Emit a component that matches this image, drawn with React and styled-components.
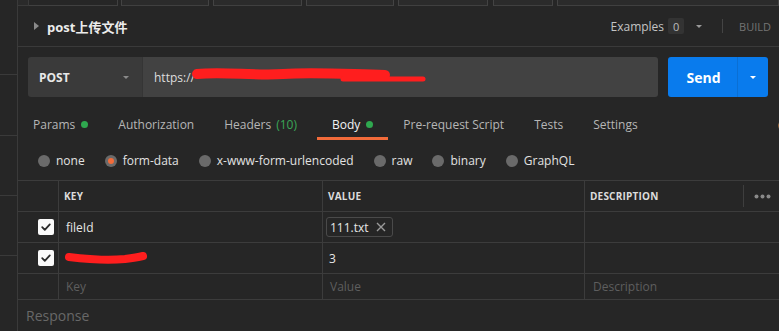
import React from "react";
import styled, { createGlobalStyle } from "styled-components";

const Global = createGlobalStyle`
  html, body { margin: 0; padding: 0; background: #262626; }
  body { font-family: "Open Sans", "Noto Sans CJK SC", sans-serif; }
  * { box-sizing: border-box; }
`;

const Root = styled.div`
  display: flex;
  width: 779px;
  height: 331px;
  overflow: hidden;
  background: #262626;
`;

const Sidebar = styled.div`
  width: 18px;
  flex: none;
  border-right: 1px solid #3a3a3a;
  display: flex;
  flex-direction: column;
`;

const SideCell = styled.div`
  height: ${(p) => p.$h}px;
  flex: none;
  border-bottom: 1px solid #3a3a3a;
`;

const Main = styled.div`
  flex: 1;
  min-width: 0;
  display: flex;
  flex-direction: column;
`;

const TopStrip = styled.div`
  display: flex;
  height: 6px;
  flex: none;
`;

const StripBox = styled.div`
  width: 11px;
  height: 6px;
  border-right: 1px solid #3a3a3a;
  border-bottom: 1px solid #3a3a3a;
  background: #2a2a2a;
`;

const StripGap = styled.div`
  width: ${(p) => p.$w}px;
  flex: none;
  border-right: ${(p) => (p.$line ? "1px solid #404040" : "none")};
  border-bottom: ${(p) => (p.$line ? "1px solid #404040" : "none")};
`;

const StripTab = styled.div`
  width: ${(p) => p.$w}px;
  flex: ${(p) => (p.$grow ? 1 : "none")};
  height: 6px;
  margin-left: ${(p) => p.$ml}px;
  background: #2b2b2b;
  border-left: 1px solid #434343;
  border-right: 1px solid #434343;
  border-bottom: 1px solid #404040;
`;

const Header = styled.div`
  height: 41px;
  flex: none;
  display: flex;
  align-items: center;
  border-bottom: 1px solid #3a3a3a;
  padding-left: 16px;
  padding-right: 8px;
`;

const Caret = styled.span`
  display: inline-block;
  width: 0;
  height: 0;
  border-left: ${(p) => p.$s}px solid transparent;
  border-right: ${(p) => p.$s}px solid transparent;
  border-top: ${(p) => p.$s}px solid ${(p) => p.$c || "#888"};
`;

const SideArrow = styled.span`
  width: 0;
  height: 0;
  border-top: 4px solid transparent;
  border-bottom: 4px solid transparent;
  border-left: 5px solid #8a8a8a;
  margin-right: 8px;
`;

const Title = styled.div`
  font-size: 13px;
  font-weight: 700;
  color: #ececec;
  flex: 1;
`;

const Examples = styled.div`
  display: flex;
  align-items: center;
  font-size: 12px;
  color: #c4c4c4;
  gap: 4px;
`;

const Badge = styled.span`
  width: 16px;
  height: 16px;
  display: inline-flex;
  align-items: center;
  justify-content: center;
  background: #333;
  border-radius: 2px;
  font-size: 11px;
  color: #bbb;
  margin-right: 8px;
`;

const VDivider = styled.span`
  width: 1px;
  height: 14px;
  background: #444;
  margin: 0 16px 0 20px;
`;

const Build = styled.span`
  font-size: 11px;
  color: #747474;
`;

const UrlRow = styled.div`
  display: flex;
  height: 40px;
  margin-top: 10px;
  padding: 0 11px 0 10px;
  flex: none;
`;

const Method = styled.div`
  width: 115px;
  display: flex;
  align-items: center;
  justify-content: space-between;
  padding: 0 13px 0 11px;
  background: #3a3a3a;
  border-radius: 3px 0 0 3px;
  border-right: 1px solid #353535;
  font-size: 12px;
  font-weight: 700;
  color: #e8e8e8;
`;

const UrlInput = styled.div`
  flex: 1;
  position: relative;
  display: flex;
  align-items: center;
  padding-left: 11px;
  background: #424242;
  border-radius: 0 3px 3px 0;
  font-size: 12px;
  color: #dedede;
  margin-right: 10px;
`;

const Scribble = styled.svg`
  position: absolute;
  left: ${(p) => p.$x}px;
  top: ${(p) => p.$y}px;
  overflow: visible;
`;

const SendGroup = styled.div`
  width: 100px;
  display: flex;
  background: #097bed;
  border-radius: 3px;
`;

const SendMain = styled.div`
  width: 70px;
  display: flex;
  align-items: center;
  justify-content: center;
  border-right: 1px solid #0a6fd4;
  font-size: 14px;
  font-weight: 700;
  color: #fff;
  padding-left: 2px;
`;

const SendDrop = styled.div`
  flex: 1;
  display: flex;
  align-items: center;
  justify-content: center;
`;

const Tabs = styled.div`
  display: flex;
  height: 33px;
  margin-top: 10px;
  flex: none;
  position: relative;
`;

const Tab = styled.div`
  display: flex;
  align-items: center;
  padding: 0 15px;
  height: 33px;
  font-size: 12px;
  color: ${(p) => (p.$active ? "#f4f4f4" : "#b6b6b6")};
  border-bottom: 3px solid ${(p) => (p.$active ? "#f26b3a" : "transparent")};
  padding-top: 4px;
  gap: 6px;
`;

const Dot = styled.span`
  width: 7px;
  height: 7px;
  border-radius: 50%;
  background: #2fa84f;
`;

const Count = styled.span`
  color: #3aa757;
  margin-left: -1px;
  margin-right: 5px;
`;

const CutTab = styled.div`
  position: absolute;
  right: -6px;
  top: 10px;
  font-size: 12px;
  color: #f26b3a;
`;

const Radios = styled.div`
  display: flex;
  align-items: center;
  height: 40px;
  padding-left: 20px;
  padding-top: 1px;
  flex: none;
`;

const RadioItem = styled.label`
  display: flex;
  align-items: center;
  gap: 6px;
  margin-right: 20px;
  font-size: 12px;
  color: #e2e2e2;
`;

const RadioCircle = styled.span`
  width: 12px;
  height: 12px;
  border-radius: 50%;
  background: #6a6a6a;
  display: flex;
  align-items: center;
  justify-content: center;
  &::after {
    content: "";
    width: 6px;
    height: 6px;
    border-radius: 50%;
    background: ${(p) => (p.$on ? "#f26b3a" : "transparent")};
  }
`;

const Table = styled.div`
  display: grid;
  grid-template-columns: 41px 264px 262px 1fr;
  border-top: 1px solid #3c3c3c;
  flex: none;
`;

const Cell = styled.div`
  height: ${(p) => p.$h}px;
  border-right: ${(p) => (p.$last ? "none" : "1px solid #3c3c3c")};
  border-bottom: 1px solid #3c3c3c;
  display: flex;
  align-items: center;
  padding-left: ${(p) => p.$pl || 0}px;
  justify-content: ${(p) => (p.$end ? "flex-end" : "flex-start")};
  padding-right: ${(p) => p.$pr || 0}px;
  position: relative;
  font-size: 12px;
  color: ${(p) => (p.$ph ? "#5e5e5e" : "#e6e6e6")};
`;

const HeadText = styled.span`
  font-size: 10px;
  font-weight: 700;
  color: #dcdcdc;
  letter-spacing: 0.2px;
  flex: 1;
`;

const HeadSep = styled.span`
  width: 1px;
  height: 22px;
  background: #3e3e3e;
  margin-right: 10px;
`;

const Box = styled.span`
  width: 16px;
  height: 16px;
  background: #fafafa;
  border-radius: 2px;
  display: flex;
  align-items: center;
  justify-content: center;
`;

const Chip = styled.span`
  display: inline-flex;
  align-items: center;
  gap: 7px;
  height: 20px;
  padding: 0 6px 0 3px;
  border: 1px solid #4a4a4a;
  border-radius: 3px;
  font-size: 12px;
  color: #e6e6e6;
  margin-left: -3px;
`;

const Response = styled.div`
  flex: 1;
  display: flex;
  align-items: center;
  padding-left: 8px;
  font-size: 14px;
  color: #686868;
`;

const Check = () => (
  <Box>
    <svg width="12" height="12" viewBox="0 0 12 12">
      <path d="M2.2 6.2 L4.8 8.8 L9.8 3.4" fill="none" stroke="#2a2a2a" strokeWidth="1.8" strokeLinecap="round" strokeLinejoin="round" />
    </svg>
  </Box>
);

const Radio = ({ on, children }) => (
  <RadioItem>
    <RadioCircle $on={on} />
    {children}
  </RadioItem>
);

export default function App() {
  return (
    <Root>
      <Global />
      <Sidebar>
        <SideCell $h={75} />
        <SideCell $h={61} />
        <SideCell $h={60} />
        <SideCell $h={60} />
      </Sidebar>
      <Main>
        <TopStrip>
          <StripBox />
          <StripGap $w={89} $line />
          <StripTab $w={88} $ml={3} />
          <StripTab $w={89} $ml={4} />
          <StripTab $w={88} $ml={4} />
          <StripTab $w={90} $ml={4} />
          <StripTab $w={60} $ml={5} />
          <StripTab $grow $ml={4} />
        </TopStrip>
        <Header>
          <SideArrow />
          <Title>post上传文件</Title>
          <Examples>
            Examples
            <Badge>0</Badge>
            <Caret $s={3.5} $c="#9a9a9a" />
          </Examples>
          <VDivider />
          <Build>BUILD</Build>
        </Header>
        <UrlRow>
          <Method>
            POST
            <Caret $s={3.5} $c="#8a8a8a" />
          </Method>
          <UrlInput>
            https://
            <Scribble $x={50} $y={9} width="240" height="18">
              <path d="M4 8 C 30 5, 60 10, 90 8 C 120 6, 150 8, 192 9" fill="none" stroke="#ff1e1e" strokeWidth="10" strokeLinecap="round" />
              <path d="M150 13 L 230 13" fill="none" stroke="#ff1e1e" strokeWidth="5" strokeLinecap="round" />
            </Scribble>
          </UrlInput>
          <SendGroup>
            <SendMain>Send</SendMain>
            <SendDrop>
              <Caret $s={3.5} $c="#ffffff" />
            </SendDrop>
          </SendGroup>
        </UrlRow>
        <Tabs>
          <Tab>
            Params <Dot />
          </Tab>
          <Tab>Authorization</Tab>
          <Tab>
            Headers <Count>(10)</Count>
          </Tab>
          <Tab $active>
            Body <Dot />
          </Tab>
          <Tab>Pre-request Script</Tab>
          <Tab>Tests</Tab>
          <Tab>Settings</Tab>
          <CutTab>C</CutTab>
        </Tabs>
        <Radios>
          <Radio>none</Radio>
          <Radio on>form-data</Radio>
          <Radio>x-www-form-urlencoded</Radio>
          <Radio>raw</Radio>
          <Radio>binary</Radio>
          <Radio>GraphQL</Radio>
        </Radios>
        <Table>
          <Cell $h={31} />
          <Cell $h={31} $pl={5}>
            <HeadText>KEY</HeadText>
          </Cell>
          <Cell $h={31} $pl={5}>
            <HeadText>VALUE</HeadText>
          </Cell>
          <Cell $h={31} $pl={5} $last>
            <HeadText>DESCRIPTION</HeadText>
            <HeadSep />
            <svg width="17" height="5" viewBox="0 0 17 5" style={{ marginRight: 8 }}>
              <circle cx="2.5" cy="2.5" r="2" fill="#8a8a8a" />
              <circle cx="8.5" cy="2.5" r="2" fill="#8a8a8a" />
              <circle cx="14.5" cy="2.5" r="2" fill="#8a8a8a" />
            </svg>
          </Cell>

          <Cell $h={31} $end $pr={4}>
            <Check />
          </Cell>
          <Cell $h={31} $pl={7}>fileId</Cell>
          <Cell $h={31} $pl={6}>
            <Chip>
              111.txt
              <svg width="10" height="10" viewBox="0 0 10 10">
                <path d="M1 1 L9 9 M9 1 L1 9" stroke="#9a9a9a" strokeWidth="1.4" />
              </svg>
            </Chip>
          </Cell>
          <Cell $h={31} $last />

          <Cell $h={31} $end $pr={4}>
            <Check />
          </Cell>
          <Cell $h={31} $pl={7}>
            <Scribble $x={6} $y={8} width="84" height="14">
              <path d="M4 6 C 20 8, 40 10, 60 8 C 68 7, 74 6, 78 5" fill="none" stroke="#ff1e1e" strokeWidth="8" strokeLinecap="round" />
            </Scribble>
          </Cell>
          <Cell $h={31} $pl={6}>3</Cell>
          <Cell $h={31} $last />

          <Cell $h={26} />
          <Cell $h={26} $pl={7} $ph>Key</Cell>
          <Cell $h={26} $pl={7} $ph>Value</Cell>
          <Cell $h={26} $pl={8} $ph $last>Description</Cell>
        </Table>
        <Response>Response</Response>
      </Main>
    </Root>
  );
}
